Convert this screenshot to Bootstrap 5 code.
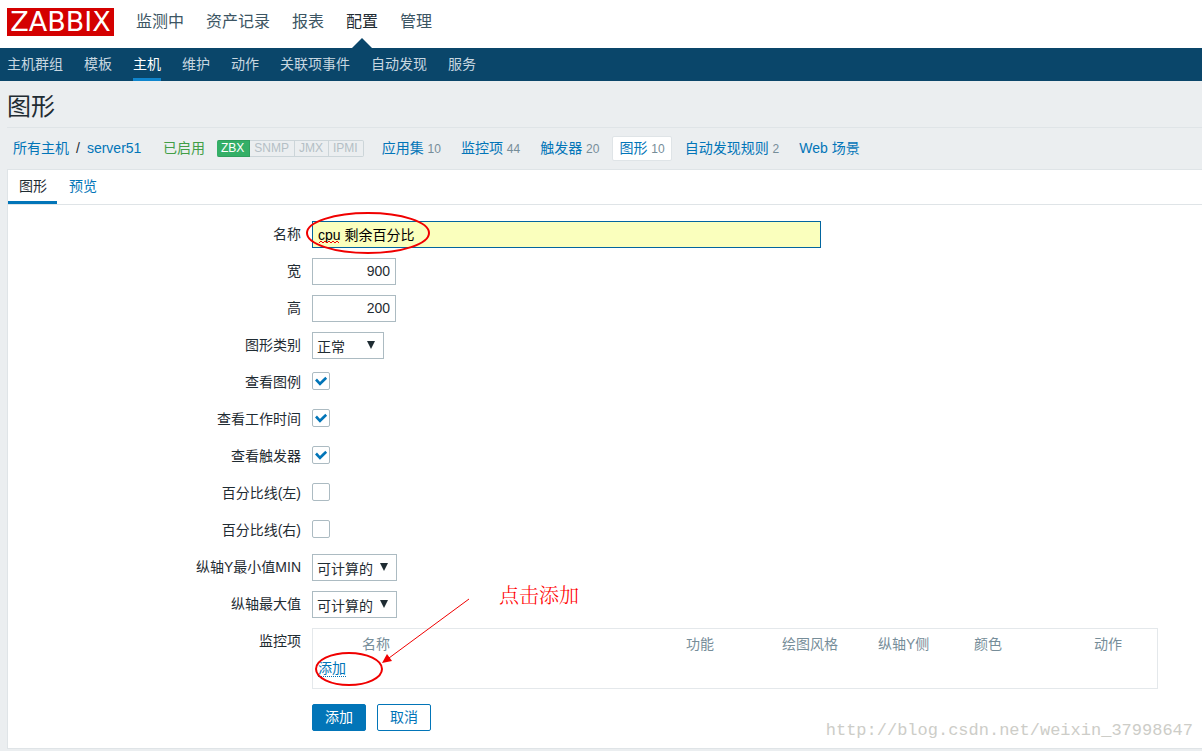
<!DOCTYPE html>
<html lang="zh-CN">
<head>
<meta charset="utf-8">
<meta name="viewport" content="width=device-width, initial-scale=1">
<title>图形</title>
<link rel="stylesheet" href="https://cdn.jsdelivr.net/npm/bootstrap@5.3.0/dist/css/bootstrap.min.css">
<style>
  body { background: #ebeef0; color: #1f2c33; font: 14px/20px "Liberation Sans", "Noto Sans CJK SC", sans-serif; }
  a { color: #0275b8; text-decoration: none; }
  .logo { background: #d40000; color: #fff; font: 27px/28px "DejaVu Sans", sans-serif; height: 28px; width: 107px; }
  .top-bar { height: 48px; padding: 0 7px; }
  .top-menu { gap: 22px; margin-left: 22px; font-size: 16px; line-height: 44px; }
  .top-menu a { color: #3c5563; display: block; height: 48px; }
  .top-menu a.active { color: #1f2c33; position: relative; }
  .top-menu a.active::after { content: ""; position: absolute; bottom: 0; left: 50%; margin-left: -10px; border: 10px solid transparent; border-top: 0; border-bottom-color: #0a466a; }
  .sub-menu { background: #0a466a; gap: 21px; padding: 0 7px; height: 33px; line-height: 32px; }
  .sub-menu a { color: #c8d7e0; height: 33px; }
  .sub-menu a.active { color: #fff; border-bottom: 3px solid #0f85cd; }
  .page-title { font-size: 24px; line-height: 40px; font-weight: 400; padding: 6px 0 0 7px; margin: 0; }
  .object-bar { border-top: 1px solid #dfe4e7; margin-left: 7px; padding: 8px 0 9px; height: 42px; }
  .crumbs { padding: 0 6px; gap: 7px; width: 156px; }
  .enabled { color: #429e47; width: 54px; }
  .agents { font-size: 12px; line-height: 15px; margin-right: 11px; }
  .agents span { border: 1px solid #ccd5d9; border-left: 0; color: #b4bfc5; padding: 0 5px 0 4px; text-align: center; }
  .agents .on { background: #34af67; border-color: #2f9f5e; color: #fff; border-radius: 2px 0 0 2px; }
  .agents span:last-child { border-radius: 0 2px 2px 0; }
  .object-links { gap: 6px; }
  .object-links a { border: 1px solid transparent; padding: 1px 6px; border-radius: 2px; white-space: nowrap; }
  .object-links a.active { background: #fff; border-color: #dfe4e7; }
  .object-links sup { font-size: 12px; color: #768d99; top: 0; line-height: 20px; vertical-align: baseline; }
  .panel { background: #fff; border: 1px solid #dfe4e7; border-right: 0; margin-left: 7px; padding-bottom: 17px; position: relative; }
  .panel-tabs { border-bottom: 1px solid #dfe4e7; height: 35px; }
  .panel-tabs a { padding: 0 12px; line-height: 33px; height: 34px; }
  .panel-tabs a.active { color: #1f2c33; border-bottom: 3px solid #0275b8; padding: 0 10px 0 11px; }
  .graph-form { padding-top: 16px; }
  .field { display: flex; margin-bottom: 10px; min-height: 27px; }
  .field > label, .field > .caption { flex: 0 0 304px; padding-right: 11px; text-align: right; line-height: 26px; }
  .box-in { border: 1px solid #acbbc2; border-radius: 0; height: 27px; padding: 0 5px 2px; color: #1f2c33; background: #fff; font: inherit; }
  .name-box { width: 509px; max-width: 60vw; background: #faffbd; border-color: #02659f; color: #000; outline: 0; }
  .num-box { width: 84px; text-align: right; }
  .pick { position: relative; }
  .pick select { appearance: none; padding: 2px 4px 0; }
  .pick::after { content: ""; position: absolute; right: 9px; top: 9px; width: 8px; height: 8px; background: #1f2c33; clip-path: polygon(0 0, 100% 0, 50% 100%); pointer-events: none; }
  .pick-short { width: 72px; }
  .pick-long { width: 85px; }
  .tick-box.form-check-input { width: 18px; height: 18px; margin: 3px 0 0; border: 1px solid #acbbc2; border-radius: 2px; background-color: #fff; }
  .tick-box.form-check-input:checked { background-color: #fff; border-color: #acbbc2; background-size: 16px 16px; background-image: url("data:image/svg+xml,%3Csvg xmlns='http://www.w3.org/2000/svg' viewBox='0 0 16 16'%3E%3Cpath d='M3 6.5 7 10.8 13.2 4.8' fill='none' stroke='%230275b8' stroke-width='2.6'/%3E%3C/svg%3E"); }
  .items-box { border: 1px solid #e4e8eb; flex: 0 1 846px; padding: 3px 5px 8px; position: relative; margin-bottom: 5px; }
  .items-table { width: 100%; table-layout: fixed; line-height: 24px; }
  .items-table th, .items-table td { padding: 0; }
  .items-table th { font-weight: 400; color: #768d99; white-space: nowrap; }
  .dotted { border-bottom: 1px dotted #0275b8; }
  .act { height: 27px; width: 54px; padding: 0; border: 1px solid #0275b8; border-radius: 2px; font-size: 14px; line-height: 25px; color: #0275b8; background: #fff; }
  .act-main { background: #0275b8; color: #fff; margin-right: 11px; }
  .overlay { position: absolute; pointer-events: none; overflow: visible; fill: none; stroke: #f00000; stroke-width: 2; }
  .tip-text { position: absolute; left: 186px; top: -46px; color: #f00; font-size: 20px; line-height: 24px; font-weight: 300; white-space: nowrap; font-family: "Noto Serif CJK SC", "Noto Sans CJK SC", serif; }
  .watermark { position: absolute; right: 9px; bottom: 5px; color: #cdcdc8; font: 17px/24px "Liberation Mono", monospace; }
</style>
</head>
<body>
<header>
  <div class="top-bar bg-white d-flex">
    <a href="#" class="logo mt-2 d-flex justify-content-center">ZABBIX</a>
    <nav class="top-menu d-flex">
      <a href="#">监测中</a><a href="#">资产记录</a><a href="#">报表</a><a href="#" class="active">配置</a><a href="#">管理</a>
    </nav>
  </div>
  <nav class="sub-menu d-flex">
    <a href="#">主机群组</a><a href="#">模板</a><a href="#" class="active">主机</a><a href="#">维护</a><a href="#">动作</a><a href="#">关联项事件</a><a href="#">自动发现</a><a href="#">服务</a>
  </nav>
</header>
<main>
  <h1 class="page-title">图形</h1>
  <div class="object-bar d-flex align-items-center">
    <div class="crumbs d-flex"><a href="#">所有主机</a><span>/</span><a href="#">server51</a></div>
    <span class="enabled">已启用</span>
    <div class="agents d-flex"><span class="on">ZBX</span><span>SNMP</span><span>JMX</span><span>IPMI</span></div>
    <nav class="object-links d-flex">
      <a href="#">应用集 <sup>10</sup></a>
      <a href="#">监控项 <sup>44</sup></a>
      <a href="#">触发器 <sup>20</sup></a>
      <a href="#" class="active">图形 <sup>10</sup></a>
      <a href="#">自动发现规则 <sup>2</sup></a>
      <a href="#">Web 场景</a>
    </nav>
  </div>

  <section class="panel">
    <nav class="panel-tabs d-flex"><a href="#" class="active">图形</a><a href="#">预览</a></nav>
    <form class="graph-form">
      <div class="field">
        <label for="name">名称</label>
        <div class="position-relative">
          <input id="name" type="text" class="box-in name-box" value="cpu 剩余百分比" spellcheck="false">
          <svg class="overlay" style="left:-6px;top:-10px" width="124" height="42">
            <ellipse cx="62" cy="22" rx="61" ry="20"/>
            <path stroke-width="1" d="M13 32l2-2 2 2 2-2 2 2 2-2 2 2 2-2 2 2 2-2 2 2"/>
          </svg>
        </div>
      </div>
      <div class="field"><label for="w">宽</label><input id="w" type="text" class="box-in num-box" value="900"></div>
      <div class="field"><label for="h">高</label><input id="h" type="text" class="box-in num-box" value="200"></div>
      <div class="field"><label for="kind">图形类别</label><div class="pick"><select id="kind" class="box-in pick-short"><option>正常</option></select></div></div>
      <div class="field"><label for="legend">查看图例</label><input id="legend" type="checkbox" class="form-check-input tick-box" checked></div>
      <div class="field"><label for="work">查看工作时间</label><input id="work" type="checkbox" class="form-check-input tick-box" checked></div>
      <div class="field"><label for="trig">查看触发器</label><input id="trig" type="checkbox" class="form-check-input tick-box" checked></div>
      <div class="field"><label for="pl">百分比线(左)</label><input id="pl" type="checkbox" class="form-check-input tick-box"></div>
      <div class="field"><label for="pr">百分比线(右)</label><input id="pr" type="checkbox" class="form-check-input tick-box"></div>
      <div class="field"><label for="ymin">纵轴Y最小值MIN</label><div class="pick"><select id="ymin" class="box-in pick-long"><option>可计算的</option></select></div></div>
      <div class="field"><label for="ymax">纵轴最大值</label><div class="pick"><select id="ymax" class="box-in pick-long"><option>可计算的</option></select></div></div>
      <div class="field">
        <span class="caption">监控项</span>
        <div class="items-box">
          <table class="items-table">
            <colgroup><col style="width:44px"><col><col style="width:96px"><col style="width:96px"><col style="width:96px"><col style="width:120px"><col style="width:58px"></colgroup>
            <thead><tr><th></th><th>名称</th><th>功能</th><th>绘图风格</th><th>纵轴Y侧</th><th>颜色</th><th>动作</th></tr></thead>
            <tbody><tr><td colspan="7"><a href="#" class="dotted">添加</a></td></tr></tbody>
          </table>
          <svg class="overlay" style="left:2px;top:-32px" width="160" height="92">
            <ellipse cx="34" cy="72" rx="33" ry="16"/>
            <path stroke-width="1" d="M154 2 74 61"/>
            <path fill="#f00000" stroke="none" d="M67 66l5-9 5 7z"/>
          </svg>
          <span class="tip-text">点击添加</span>
        </div>
      </div>
      <div class="field mb-0">
        <span class="caption"></span>
        <button type="button" class="act act-main">添加</button>
        <button type="button" class="act">取消</button>
      </div>
    </form>
    <span class="watermark">http://blog.csdn.net/weixin_37998647</span>
  </section>
</main>
<script src="https://cdn.jsdelivr.net/npm/bootstrap@5.3.0/dist/js/bootstrap.bundle.min.js"></script>
</body>
</html>
